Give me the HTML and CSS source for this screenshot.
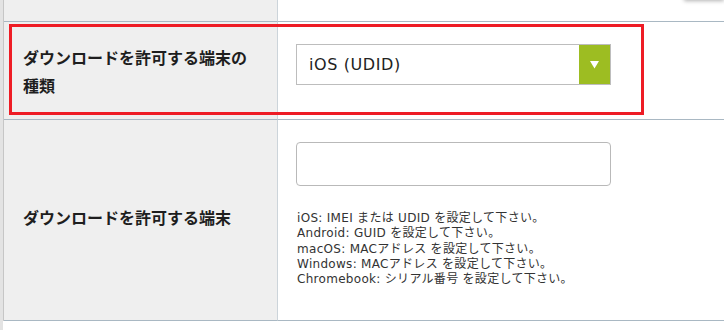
FILE: index.html
```html
<!DOCTYPE html>
<html lang="ja">
<head>
<meta charset="utf-8">
<title>端末設定</title>
<link rel="stylesheet" href="styles.css">
</head>
<body>
<div class="page">
  <div class="menu-shadow"></div>
  <table class="form">
    <tr class="row-top">
      <th class="label"></th>
      <td class="field"></td>
    </tr>
    <tr class="row-type">
      <th class="label">ダウンロードを許可する端末の<br>種類</th>
      <td class="field">
        <div class="select">
          <span class="select-value">iOS (UDID)</span>
          <span class="select-btn"><svg width="9" height="8" viewBox="0 0 9 8"><polygon points="0,0 9,0 4.5,7.5" fill="#fff"/></svg></span>
        </div>
      </td>
    </tr>
    <tr class="row-device">
      <th class="label">ダウンロードを許可する端末</th>
      <td class="field">
        <input class="text-input" type="text">
        <p class="help">iOS: IMEI または UDID を設定して下さい。<br>Android: GUID を設定して下さい。<br>macOS: MACアドレス を設定して下さい。<br>Windows: MACアドレス を設定して下さい。<br>Chromebook: シリアル番号 を設定して下さい。</p>
      </td>
    </tr>
  </table>
  <div class="highlight"></div>
</div>
</body>
</html>
```
FILE: styles.css
```css
html, body {
  margin: 0;
  padding: 0;
  background: #fff;
}
body {
  font-family: "DejaVu Sans", "Noto Sans CJK JP", sans-serif;
  color: #222;
  overflow: hidden;
}
.page {
  position: relative;
  width: 724px;
  height: 330px;
  border-left: 3px solid #e3e3e3;
  box-sizing: border-box;
  overflow: hidden;
}
.menu-shadow {
  position: absolute;
  top: -20px;
  left: 681px;
  width: 40px;
  height: 20px;
  background: #fff;
  box-shadow: 0 1px 4px rgba(0, 0, 0, 0.3);
}
.form {
  border-collapse: separate;
  border-spacing: 0;
  width: 721px;
  border-left: 1px solid #c6c6c6;
}
.label {
  width: 254px;
  background: #efefef;
  border-right: 1px solid #ccd4da;
  border-bottom: 1px solid #a9b8c3;
  padding: 0 0 0 19px;
  text-align: left;
  vertical-align: middle;
  font-family: "Noto Sans CJK JP", sans-serif;
  font-weight: bold;
  font-size: 16px;
  line-height: 28px;
  color: #1e1e1e;
}
.field {
  background: #fff;
  border-bottom: 1px solid #a9b8c3;
  padding: 22px 18px 33px 18px;
  vertical-align: top;
}
.row-top .label,
.row-top .field {
  height: 22px;
  padding: 0;
  box-sizing: border-box;
}
.row-type .field {
  padding-bottom: 34px;
}
.row-device .label {
  padding-bottom: 6px;
}
.select {
  display: flex;
  width: 315px;
  height: 41px;
  box-sizing: border-box;
  border: 1px solid #bdbdbd;
  background: #fff;
}
.select-value {
  flex: 1;
  display: flex;
  align-items: center;
  padding-left: 12px;
  font-size: 16px;
  letter-spacing: 0.6px;
  color: #222;
}
.select-btn {
  width: 31px;
  background: #9dbd22;
  display: flex;
  align-items: center;
  justify-content: center;
}
.text-input {
  display: block;
  width: 315px;
  height: 44px;
  box-sizing: border-box;
  border: 1px solid #b9b9b9;
  border-radius: 4px;
  margin: 0;
  padding: 0 10px;
  background: #fff;
}
.help {
  margin: 25px 0 0 1px;
  font-size: 12px;
  line-height: 15.3px;
  letter-spacing: 0.3px;
  color: #333;
}
.highlight {
  position: absolute;
  left: 6px;
  top: 24px;
  width: 635px;
  height: 91px;
  box-sizing: border-box;
  border: 3px solid #ee1c25;
  pointer-events: none;
}
```
